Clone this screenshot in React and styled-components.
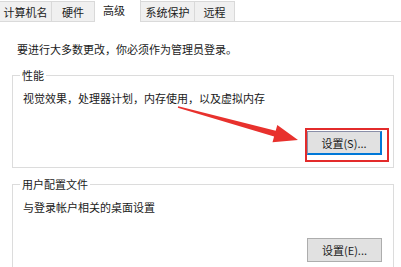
import React from "react";
import styled, { createGlobalStyle } from "styled-components";

const Global = createGlobalStyle`
  html, body { margin: 0; padding: 0; background: #ffffff; }
  body {
    font-family: "Noto Sans CJK SC", "Noto Sans", "Liberation Sans", sans-serif;
    font-size: 11px;
    color: #1a1a1a;
  }
`;

const Page = styled.div`
  position: relative;
  width: 401px;
  height: 267px;
  overflow: hidden;
  background: #ffffff;
`;

const TabBar = styled.div`
  display: flex;
  align-items: flex-end;
  height: 22px;
  box-sizing: border-box;
  border-bottom: 1px solid #dadada;
`;

const Tab = styled.div`
  box-sizing: border-box;
  width: ${(p) => p.$w}px;
  height: ${(p) => (p.$active ? 23 : 20)}px;
  margin-bottom: ${(p) => (p.$active ? -1 : 0)}px;
  display: flex;
  align-items: center;
  justify-content: ${(p) => (p.$active ? "flex-start" : "center")};
  padding-left: ${(p) => (p.$active ? 8 : 0)}px;
  padding-bottom: ${(p) => (p.$active ? 3 : 0)}px;
  background: ${(p) => (p.$active ? "#ffffff" : "#f0f0f0")};
  border-right: 1px solid #d9d9d9;
  border-top: 1px solid ${(p) => (p.$active ? "#ffffff" : "#d9d9d9")};
  line-height: 14px;
  color: #1a1a1a;
`;

const Content = styled.div`
  display: flex;
  flex-direction: column;
`;

const Notice = styled.div`
  margin: 19px 0 0 17px;
  line-height: 16px;
`;

const Group = styled.fieldset`
  box-sizing: border-box;
  width: 382px;
  margin: ${(p) => p.$top}px 0 0 12px;
  padding: 8px 11px 12px 10px;
  border: 1px solid #dcdcdc;
  display: flex;
  flex-direction: column;
  min-width: 0;
`;

const Legend = styled.legend`
  margin-left: -3px;
  padding: 0 2px;
  line-height: 14px;
  color: #1a1a1a;
`;

const Desc = styled.div`
  line-height: 16px;
`;

const ButtonRow = styled.div`
  display: flex;
  justify-content: flex-end;
  margin-top: ${(p) => p.$gap}px;
`;

const Highlight = styled.div`
  position: relative;
`;

const RedBox = styled.div`
  position: absolute;
  left: -2px;
  top: -3px;
  right: -7px;
  bottom: -7px;
  border: 2px solid #e32b2b;
  pointer-events: none;
`;

const Button = styled.button`
  box-sizing: border-box;
  width: 75px;
  height: 24px;
  margin: 0;
  padding: 0;
  font-family: inherit;
  font-size: 11px;
  color: #1a1a1a;
  background: #e1e1e1;
  border-style: solid;
  border-width: ${(p) => (p.$focused ? "1px 2px 2px 1px" : "1px")};
  border-color: ${(p) =>
    p.$focused ? "#8a8fa8 #0078d7 #0078d7 #8a8fa8" : "#adadad"};
  line-height: 14px;
`;

const ArrowLayer = styled.svg`
  position: absolute;
  left: 0;
  top: 0;
  pointer-events: none;
`;

export default function App() {
  return (
    <Page>
      <Global />
      <TabBar>
        <Tab $w={52}>计算机名</Tab>
        <Tab $w={43}>硬件</Tab>
        <Tab $w={46} $active>高级</Tab>
        <Tab $w={54}>系统保护</Tab>
        <Tab $w={40}>远程</Tab>
      </TabBar>
      <Content>
        <Notice>要进行大多数更改，你必须作为管理员登录。</Notice>
        <Group $top={11}>
          <Legend>性能</Legend>
          <Desc>视觉效果，处理器计划，内存使用，以及虚拟内存</Desc>
          <ButtonRow $gap={25}>
            <Highlight>
              <Button $focused>设置(S)...</Button>
              <RedBox />
            </Highlight>
          </ButtonRow>
        </Group>
        <Group $top={9}>
          <Legend>用户配置文件</Legend>
          <Desc>与登录帐户相关的桌面设置</Desc>
          <ButtonRow $gap={23}>
            <Button>设置(E)...</Button>
          </ButtonRow>
        </Group>
      </Content>
      <ArrowLayer width="401" height="267" viewBox="0 0 401 267">
        <polygon
          fill="#e8312d"
          points="178.2,106.2 275.7,130.7 277.3,124.9 298,140 272.5,142.3 274.1,136.5 177.8,107.8"
        />
      </ArrowLayer>
    </Page>
  );
}
